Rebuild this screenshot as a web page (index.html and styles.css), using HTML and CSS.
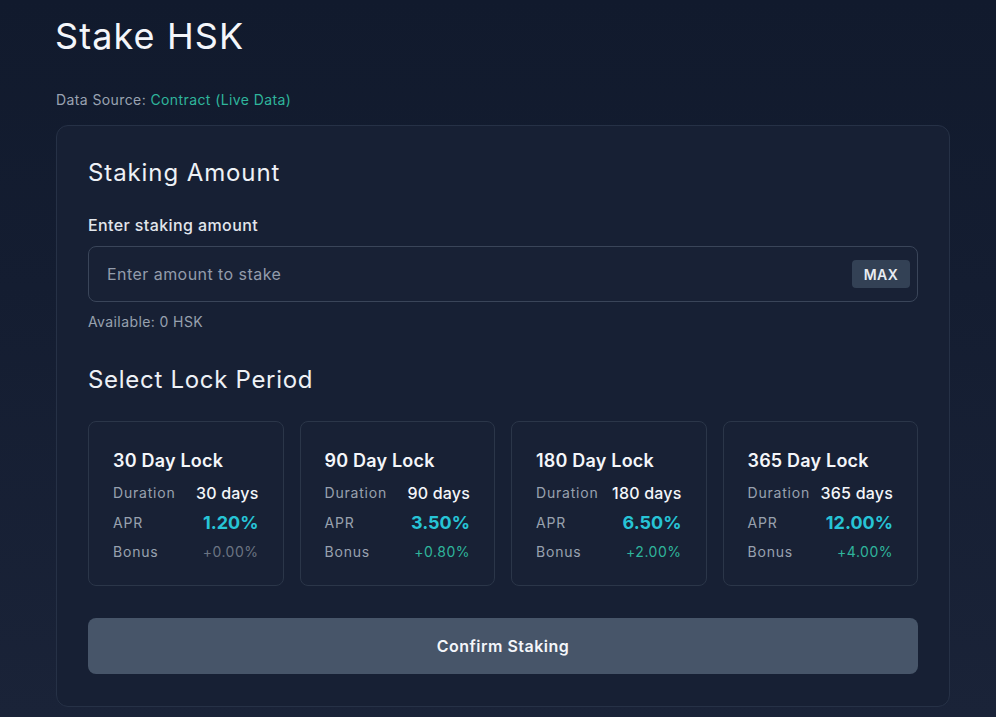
FILE: index.html
```html
<!DOCTYPE html>
<html lang="en">
<head>
<meta charset="utf-8">
<title>Stake HSK</title>
<link rel="stylesheet" href="styles.css">
</head>
<body>
<main class="page">
  <h1 class="title">Stake HSK</h1>
  <p class="source">Data Source: <span class="source-link">Contract (Live Data)</span></p>
  <section class="card">
    <h2 class="section-title">Staking Amount</h2>
    <label class="label" for="amount">Enter staking amount</label>
    <div class="input-wrap">
      <input id="amount" class="input" type="text" placeholder="Enter amount to stake">
      <button class="max-btn" type="button">MAX</button>
    </div>
    <p class="available">Available: 0 HSK</p>

    <h2 class="section-title lock-title">Select Lock Period</h2>
    <div class="locks">
      <div class="lock">
        <h3 class="lock-name">30 Day Lock</h3>
        <div class="row"><span class="k">Duration</span><span class="v">30 days</span></div>
        <div class="row"><span class="k">APR</span><span class="apr">1.20%</span></div>
        <div class="row"><span class="k">Bonus</span><span class="bonus zero">+0.00%</span></div>
      </div>
      <div class="lock">
        <h3 class="lock-name">90 Day Lock</h3>
        <div class="row"><span class="k">Duration</span><span class="v">90 days</span></div>
        <div class="row"><span class="k">APR</span><span class="apr">3.50%</span></div>
        <div class="row"><span class="k">Bonus</span><span class="bonus">+0.80%</span></div>
      </div>
      <div class="lock">
        <h3 class="lock-name">180 Day Lock</h3>
        <div class="row"><span class="k">Duration</span><span class="v">180 days</span></div>
        <div class="row"><span class="k">APR</span><span class="apr">6.50%</span></div>
        <div class="row"><span class="k">Bonus</span><span class="bonus">+2.00%</span></div>
      </div>
      <div class="lock">
        <h3 class="lock-name">365 Day Lock</h3>
        <div class="row"><span class="k">Duration</span><span class="v">365 days</span></div>
        <div class="row"><span class="k">APR</span><span class="apr">12.00%</span></div>
        <div class="row"><span class="k">Bonus</span><span class="bonus">+4.00%</span></div>
      </div>
    </div>

    <button class="confirm" type="button">Confirm Staking</button>
  </section>
</main>
</body>
</html>
```

FILE: styles.css
```css
* { box-sizing: border-box; }
html, body { margin: 0; padding: 0; }
body {
  background: linear-gradient(180deg, #111a2d 0%, #141d31 40%, #1a2338 100%);
  min-height: 717px;
  font-family: Inter, "Noto Sans", sans-serif;
  color: #f1f5f9;
  letter-spacing: 0.4px;
  overflow: hidden;
}
.page {
  width: 894px;
  margin-left: 56px;
  padding-top: 14px;
}
.title {
  margin: 0 0 0 -1px;
  font-size: 36px;
  font-weight: 400;
  line-height: 44px;
  color: #f4f6fa;
  letter-spacing: 1.1px;
}
.source {
  margin: 32px 0 0;
  font-size: 14px;
  line-height: 20px;
  color: #9aa3b2;
}
.source-link { color: #2fb59c; }
.card {
  margin-top: 15px;
  background: #172034;
  border: 1px solid #263146;
  border-radius: 12px;
  padding: 31px 31px 32px;
  display: flex;
  flex-direction: column;
}
.section-title {
  margin: 0;
  font-size: 24px;
  font-weight: 400;
  line-height: 32px;
  color: #eef1f6;
  letter-spacing: 0.9px;
}
.label {
  margin-top: 24px;
  font-size: 16px;
  font-weight: 500;
  line-height: 24px;
  color: #e2e6ec;
}
.input-wrap {
  margin-top: 9px;
  height: 56px;
  border: 1px solid #3a4559;
  border-radius: 8px;
  background: #182135;
  display: flex;
  align-items: center;
  padding: 0 7px 0 16px;
}
.input {
  flex: 1;
  background: transparent;
  border: 0;
  outline: none;
  font: inherit;
  font-size: 16px;
  letter-spacing: 0.45px;
  color: #e2e6ec;
}
.input::placeholder { color: #939cab; }
.max-btn {
  height: 28px;
  width: 58px;
  background: #334155;
  border: 0;
  border-radius: 4px;
  color: #e8ecf2;
  font: inherit;
  font-size: 14px;
  font-weight: 600;
  letter-spacing: 0.5px;
}
.available {
  margin: 10px 0 0;
  font-size: 14px;
  line-height: 20px;
  color: #98a1af;
}
.lock-title { margin-top: 32px; letter-spacing: 0.7px; }
.locks {
  margin-top: 25px;
  display: grid;
  grid-template-columns: repeat(4, 1fr);
  gap: 16px;
}
.lock {
  height: 165px;
  border: 1px solid #2b3649;
  border-radius: 8px;
  padding: 25px 24px 0;
  background: #182135;
}
.lock-name {
  margin: 0 0 3px;
  font-size: 18px;
  font-weight: 600;
  line-height: 28px;
  color: #f4f6fa;
  letter-spacing: 0.2px;
}
.row {
  display: flex;
  justify-content: space-between;
  align-items: center;
  height: 29.5px;
}
.k {
  font-size: 14px;
  color: #98a1af;
  letter-spacing: 0.8px;
}
.v {
  font-size: 16px;
  font-weight: 500;
  color: #f4f6fa;
  letter-spacing: 0.2px;
}
.apr {
  font-size: 18px;
  font-weight: 700;
  color: #27c4d6;
  letter-spacing: 0;
}
.bonus {
  font-size: 14px;
  color: #2fb59c;
  letter-spacing: 0.5px;
}
.bonus.zero { color: #6b7482; }
.confirm {
  margin-top: 32px;
  height: 56px;
  border: 0;
  border-radius: 8px;
  background: #475569;
  color: #f4f6fa;
  font: inherit;
  font-size: 16px;
  font-weight: 600;
  letter-spacing: 0.5px;
}
```
